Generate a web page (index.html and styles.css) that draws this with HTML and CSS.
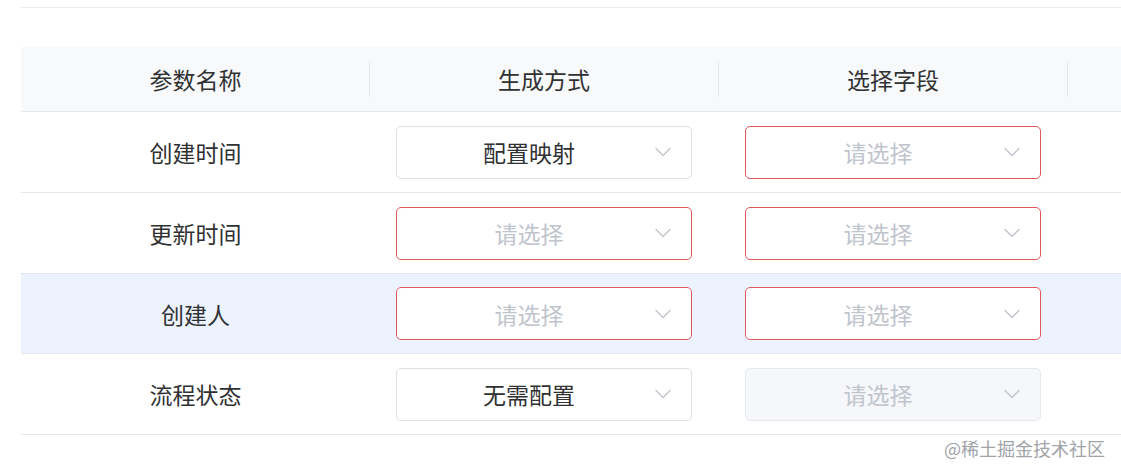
FILE: index.html
```html
<!DOCTYPE html>
<html lang="zh">
<head>
<meta charset="utf-8">
<link rel="stylesheet" href="styles.css">
</head>
<body>
<div class="page">
  <div class="topline"></div>
  <div class="table">
    <div class="row head">
      <div class="cell"><span>参数名称</span></div>
      <div class="cell"><span>生成方式</span></div>
      <div class="cell"><span>选择字段</span></div>
      <div class="cell"></div>
    </div>
    <div class="row">
      <div class="cell">创建时间</div>
      <div class="cell"><div class="select">配置映射<svg class="arrow" viewBox="0 0 16 10"><path d="M1 1.5 L8 8.5 L15 1.5"/></svg></div></div>
      <div class="cell"><div class="select error placeholder">请选择<svg class="arrow" viewBox="0 0 16 10"><path d="M1 1.5 L8 8.5 L15 1.5"/></svg></div></div>
      <div class="cell"></div>
    </div>
    <div class="row">
      <div class="cell">更新时间</div>
      <div class="cell"><div class="select error placeholder">请选择<svg class="arrow" viewBox="0 0 16 10"><path d="M1 1.5 L8 8.5 L15 1.5"/></svg></div></div>
      <div class="cell"><div class="select error placeholder">请选择<svg class="arrow" viewBox="0 0 16 10"><path d="M1 1.5 L8 8.5 L15 1.5"/></svg></div></div>
      <div class="cell"></div>
    </div>
    <div class="row hover">
      <div class="cell">创建人</div>
      <div class="cell"><div class="select error placeholder">请选择<svg class="arrow" viewBox="0 0 16 10"><path d="M1 1.5 L8 8.5 L15 1.5"/></svg></div></div>
      <div class="cell"><div class="select error placeholder">请选择<svg class="arrow" viewBox="0 0 16 10"><path d="M1 1.5 L8 8.5 L15 1.5"/></svg></div></div>
      <div class="cell"></div>
    </div>
    <div class="row">
      <div class="cell">流程状态</div>
      <div class="cell"><div class="select">无需配置<svg class="arrow" viewBox="0 0 16 10"><path d="M1 1.5 L8 8.5 L15 1.5"/></svg></div></div>
      <div class="cell"><div class="select disabled placeholder">请选择<svg class="arrow" viewBox="0 0 16 10"><path d="M1 1.5 L8 8.5 L15 1.5"/></svg></div></div>
      <div class="cell"></div>
    </div>
  </div>
  <div class="watermark">@稀土掘金技术社区</div>
</div>
</body>
</html>
```
FILE: styles.css
```css
* { box-sizing: border-box; }
html, body { margin: 0; padding: 0; background: #fff; }
body {
  font-family: "Noto Sans CJK SC", "Noto Sans", sans-serif;
  color: #303133;
  width: 1121px;
  height: 475px;
  overflow: hidden;
}
.page {
  position: relative;
  height: 475px;
  padding-left: 21px;
  padding-top: 7px;
}
.topline {
  height: 1px;
  background: #ebeef5;
  margin-left: -1px;
}
.table {
  margin-top: 39px;
}
.row {
  display: grid;
  grid-template-columns: 348px 349px 349px 1fr;
  height: 81px;
  border-bottom: 1px solid #e4e7ed;
  align-items: center;
}
.row.head {
  height: 65px;
  background: #f8f9fb;
}
.row:nth-child(4) { height: 80px; }
.row.hover { background: #ecf2fe; }
.cell {
  font-size: 23px;
  line-height: 30px;
  text-align: center;
  padding: 0 26px 0 27px;
  height: 100%;
  display: flex;
  align-items: center;
  justify-content: center;
}
.row.head .cell {
  position: relative;
}
.row.head .cell:not(:last-child)::after {
  content: "";
  position: absolute;
  right: -1px;
  top: 14px;
  height: 36px;
  width: 1px;
  background: #e4e7ed;
}
.select {
  position: relative;
  width: 296px;
  height: 53px;
  border: 1px solid #dcdfe6;
  border-radius: 5px;
  background: #fff;
  display: flex;
  align-items: center;
  justify-content: center;
  padding-right: 30px;
  font-size: 23px;
  color: #303133;
}
.select.error { border-color: #e0585b; }
.select.disabled { background: #f5f7fa; border-color: #e4e7ed; }
.select.placeholder { color: #c0c4cc; }
.arrow {
  position: absolute;
  right: 20px;
  top: 50%;
  width: 16px;
  height: 10px;
  margin-top: -5px;
  fill: none;
  stroke: #c0c4cc;
  stroke-width: 1.3;
  stroke-linecap: round;
  stroke-linejoin: round;
}
.watermark {
  position: absolute;
  right: 16px;
  top: 436px;
  font-size: 18px;
  line-height: 24px;
  color: #a0a3a8;
  letter-spacing: 0;
}
```
